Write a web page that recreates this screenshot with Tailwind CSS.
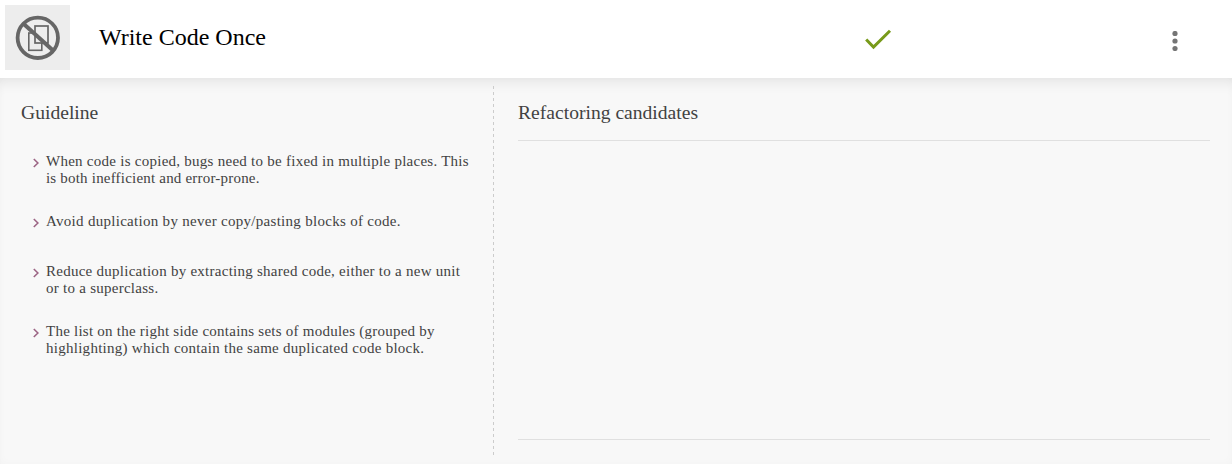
<!DOCTYPE html>
<html lang="en">
<head>
<meta charset="utf-8">
<title>Write Code Once</title>
<script src="https://cdn.jsdelivr.net/npm/@tailwindcss/browser@4"></script>
</head>
<body class="h-[464px] w-[1232px] overflow-hidden bg-white font-['Liberation_Serif','Times_New_Roman',serif]">
<div class="flex h-full flex-col">
  <header class="flex h-[78px] shrink-0 items-start bg-white pt-[5px] pl-[5px]">
    <div class="size-[65px] bg-[#ededed]">
      <svg viewBox="0 0 65 65" class="size-full" fill="none" stroke="#666">
        <rect x="23.8" y="28" width="13" height="17.3" stroke-width="1.6"/>
        <rect x="30" y="21" width="13" height="17" fill="#ededed" stroke-width="1.7"/>
        <path d="M18.5 18.8 47.5 45" stroke-width="4"/>
        <circle cx="32.8" cy="32.8" r="20.2" stroke-width="3.8"/>
      </svg>
    </div>
    <h1 class="mt-[16px] ml-[29px] w-[765px] text-[24px] leading-8 text-black">Write Code Once</h1>
    <svg viewBox="0 0 28 22" class="mt-[24px] h-[22px] w-[28px]" fill="none" stroke="#789a1a" stroke-width="3"><path d="M2.2 10.5 9.5 18 26 1.7"/></svg>
    <svg viewBox="0 0 6 20" class="mt-[26px] ml-[280px] h-5 w-[6px]" fill="#757575"><circle cx="3" cy="2.5" r="2.6"/><circle cx="3" cy="10" r="2.6"/><circle cx="3" cy="17.5" r="2.6"/></svg>
  </header>
  <main class="flex flex-1 bg-[#f8f8f8] text-[#424242] shadow-[inset_0_0_8px_rgba(0,0,0,0.025),inset_0_14px_14px_-10px_rgba(0,0,0,0.08)]">
    <section class="w-[493px] pt-[23px] pl-[21px]">
      <h2 class="text-[19.6px] leading-6">Guideline</h2>
      <ul class="mt-[28px] ml-[12px] text-[15px] leading-[17px] whitespace-nowrap">
        <li class="flex h-[60px]"><svg viewBox="0 0 6 10" class="mt-[5px] mr-[7px] h-[10px] w-[6px]" fill="none" stroke="#9c6484" stroke-width="1.6"><path d="M.8 1 4.9 5 .8 9"/></svg><p><span class="tracking-[0.26px]">When code is copied, bugs need to be fixed in multiple places. This</span><br><span class="tracking-[0.2px]">is both inefficient and error-prone.</span></p></li>
        <li class="flex h-[50px]"><svg viewBox="0 0 6 10" class="mt-[5px] mr-[7px] h-[10px] w-[6px]" fill="none" stroke="#9c6484" stroke-width="1.6"><path d="M.8 1 4.9 5 .8 9"/></svg><p class="tracking-[0.29px]">Avoid duplication by never copy/pasting blocks of code.</p></li>
        <li class="flex h-[60px]"><svg viewBox="0 0 6 10" class="mt-[5px] mr-[7px] h-[10px] w-[6px]" fill="none" stroke="#9c6484" stroke-width="1.6"><path d="M.8 1 4.9 5 .8 9"/></svg><p class="tracking-[0.26px]">Reduce duplication by extracting shared code, either to a new unit<br>or to a superclass.</p></li>
        <li class="flex h-[60px]"><svg viewBox="0 0 6 10" class="mt-[5px] mr-[7px] h-[10px] w-[6px]" fill="none" stroke="#9c6484" stroke-width="1.6"><path d="M.8 1 4.9 5 .8 9"/></svg><p><span class="tracking-[0.24px]">The list on the right side contains sets of modules (grouped by</span><br><span class="tracking-[0.27px]">highlighting) which contain the same duplicated code block.</span></p></li>
      </ul>
    </section>
    <div class="mt-[8px] h-[370px] w-px bg-[repeating-linear-gradient(to_bottom,#ccc_0_3px,transparent_3px_6px)]"></div>
    <section class="ml-[24px] w-[692px] pt-[23px]">
      <h2 class="text-[19.6px] leading-6">Refactoring candidates</h2>
      <div class="mt-[15px] h-[300px] border-y border-[#e0e0e0]"></div>
    </section>
  </main>
</div>
</body>
</html>
